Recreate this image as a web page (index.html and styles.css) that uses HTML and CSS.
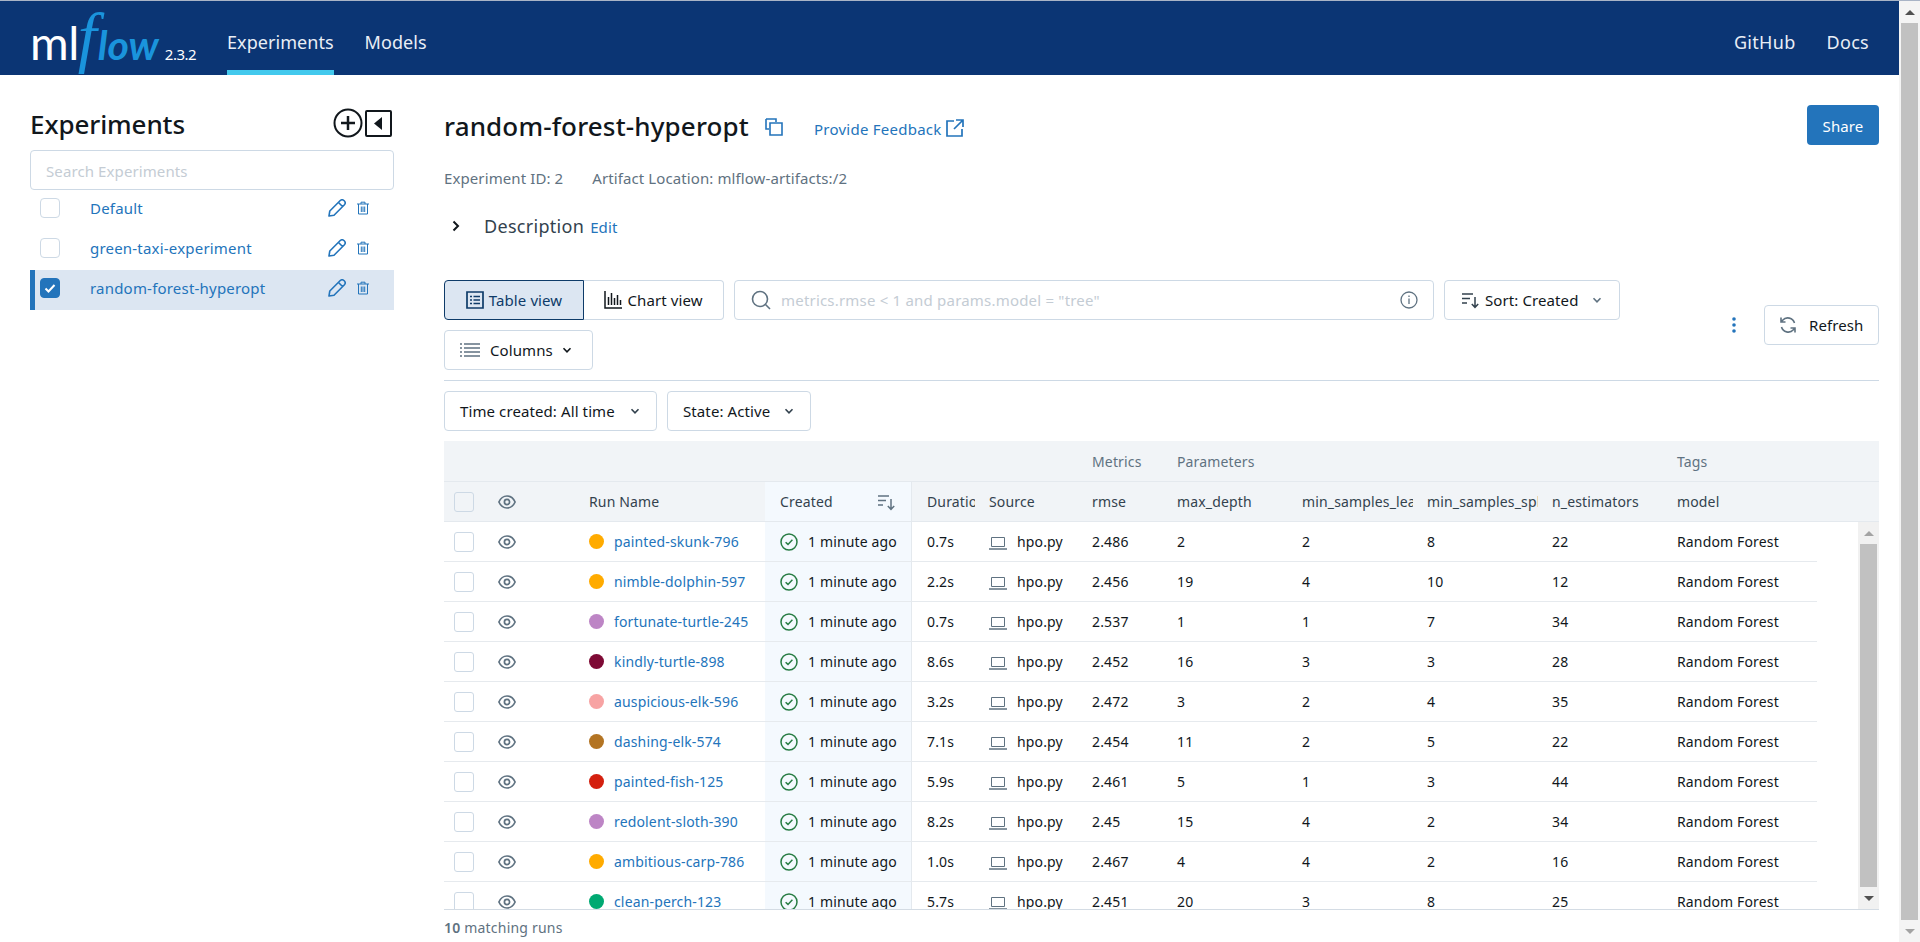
FILE: index.html
```html
<!DOCTYPE html>
<html lang="en">
<head>
<meta charset="UTF-8" />
<meta name="viewport" content="width=device-width, initial-scale=1" />
<title>MLflow Experiments</title>
<link rel="stylesheet" href="styles.css">
</head>
<body>

<svg class="defs" width="0" height="0">
  <symbol id="i-eye" viewBox="0 0 18 14"><path d="M.9 7C2.600 3.200 5.600 1 9 1S15.400 3.200 17.100 7C15.400 10.800 12.400 13 9 13S2.600 10.800 .9 7Z" fill="none" stroke="currentColor" stroke-width="1.700"/><circle cx="9" cy="7" r="2.600" fill="none" stroke="currentColor" stroke-width="1.700"/></symbol>
  <symbol id="i-ok" viewBox="0 0 18 18"><circle cx="9" cy="9" r="8" fill="none" stroke="currentColor" stroke-width="1.500"/><path d="M5.600 9.200 8 11.400 12.400 6.800" fill="none" stroke="currentColor" stroke-width="1.500"/></symbol>
  <symbol id="i-laptop" viewBox="0 0 18 16"><path d="M2.500 2.500h13v9h-13Z" fill="none" stroke="currentColor"/><path d="M0 14h18" stroke="currentColor" stroke-width="1.500"/></symbol>
  <symbol id="i-pencil" viewBox="0 0 18 18"><path d="M1 17 1.800 12 12 1.800a2.400 2.400 0 0 1 4.200 4.200L6 16.200ZM10.500 3.500 14.500 7.500" fill="none" stroke="currentColor" stroke-width="1.600" stroke-linejoin="round"/></symbol>
  <symbol id="i-trash" viewBox="0 0 14 14"><path d="M1 3h12M5 3V1.200h4V3M2.500 3v10h9V3M5.300 5.500v5.500M7 5.500v5.500M8.700 5.500v5.500" fill="none" stroke="currentColor"/></symbol>
  <symbol id="i-chev" viewBox="0 0 12 12"><path d="M2.500 4.200 6 7.800 9.500 4.200" fill="none" stroke="currentColor" stroke-width="1.600"/></symbol>
  <symbol id="i-sort" viewBox="0 0 18 18"><path d="M1 3h11M1 7.500h8M1 12h5M14 6v10M10.800 13 14 16.300 17.200 13" fill="none" stroke="currentColor" stroke-width="1.500"/></symbol>
</svg>

<div class="page">
  <header class="topbar">
    <a class="logo">
      <span class="logo-ml">ml</span><span class="logo-flow"><span class="logo-f">f</span>low</span>
      <span class="version">2.3.2</span>
    </a>
    <nav class="nav">
      <a class="nav-item active">Experiments</a>
      <a class="nav-item">Models</a>
    </nav>
    <nav class="nav-right">
      <a class="nav-item">GitHub</a>
      <a class="nav-item">Docs</a>
    </nav>
  </header>

  <div class="content">
    <aside class="sidebar">
      <div class="side-head">
        <h2>Experiments</h2>
        <div class="side-icons">
          <svg width="30" height="30" viewBox="0 0 30 30"><circle cx="15" cy="15" r="13.500" fill="none" stroke="#11171c" stroke-width="2"/><path d="M15 8v14M8 15h14" stroke="#11171c" stroke-width="2.500"/></svg>
          <svg width="27" height="27" viewBox="0 0 27 27"><rect x="1" y="1" width="25" height="25" rx="1" fill="none" stroke="#11171c" stroke-width="2"/><path d="M17 7v13l-8-6.500Z" fill="#11171c"/></svg>
        </div>
      </div>
      <input class="side-search" placeholder="Search Experiments">
      <div class="exp-row">
        <span class="check"></span>
        <a class="link exp-name">Default</a>
        <svg class="ic-pencil"><use href="#i-pencil"/></svg>
        <svg class="ic-trash"><use href="#i-trash"/></svg>
      </div>
      <div class="exp-row">
        <span class="check"></span>
        <a class="link exp-name">green-taxi-experiment</a>
        <svg class="ic-pencil"><use href="#i-pencil"/></svg>
        <svg class="ic-trash"><use href="#i-trash"/></svg>
      </div>
      <div class="exp-row selected">
        <span class="check checked"><svg width="14" height="14" viewBox="0 0 14 14"><path d="M2.500 7.500 5.500 10.500 11.500 4" fill="none" stroke="#fff" stroke-width="2"/></svg></span>
        <a class="link exp-name">random-forest-hyperopt</a>
        <svg class="ic-pencil"><use href="#i-pencil"/></svg>
        <svg class="ic-trash"><use href="#i-trash"/></svg>
      </div>
    </aside>

    <main class="main">
      <div class="title-row">
        <h1>random-forest-hyperopt</h1>
        <svg class="ic-copy" width="18" height="18" viewBox="0 0 18 18"><path d="M1 1h10v3M1 1v10h3M5 5h12v12H5Z" fill="none" stroke="#2374bb" stroke-width="1.600"/></svg>
        <a class="link feedback">Provide Feedback</a>
        <svg class="ic-ext" width="18" height="18" viewBox="0 0 18 18"><path d="M8 2H1v15h15v-7M10 1h7v7M17 1 8 10" fill="none" stroke="#2374bb" stroke-width="1.700"/></svg>
        <button class="btn-share">Share</button>
      </div>
      <div class="meta">
        <span>Experiment ID: 2</span>
        <span>Artifact Location: mlflow-artifacts:/2</span>
      </div>
      <div class="desc">
        <svg width="12" height="12" viewBox="0 0 12 12"><path d="M3.500 1.500 8 6l-4.500 4.500" fill="none" stroke="#11171c" stroke-width="2"/></svg>
        <span class="desc-title">Description</span>
        <a class="link desc-edit">Edit</a>
      </div>

      <div class="toolbar">
        <div class="toolbar-left">
          <div class="tool-row">
            <div class="segment">
              <button class="seg-btn seg-active">
                <svg width="18" height="18" viewBox="0 0 18 18"><path d="M1 1h16v16H1Z" fill="none" stroke="#0e3b69" stroke-width="1.700"/><path d="M4 5.500h2M4 9h2M4 12.500h2M7.500 5.500h6.500M7.500 9h6.500M7.500 12.500h6.500" stroke="#0e3b69" stroke-width="1.500"/></svg>
                Table view
              </button>
              <button class="seg-btn seg-second">
                <svg width="18" height="18" viewBox="0 0 18 18"><path d="M1 0v17h17M4.500 14V6M7.500 14V2M10.500 14V7M13.500 14V4M16.500 14V9" fill="none" stroke="#11171c" stroke-width="1.500"/></svg>
                Chart view
              </button>
            </div>
            <div class="searchbox">
              <svg class="ic-search" width="20" height="20" viewBox="0 0 20 20"><circle cx="9" cy="9" r="7.500" fill="none" stroke="#5f7281" stroke-width="1.600"/><path d="M14.500 14.500 19 19" stroke="#5f7281" stroke-width="1.600"/></svg>
              <span class="placeholder">metrics.rmse &lt; 1 and params.model = "tree"</span>
              <svg width="18" height="18" viewBox="0 0 18 18"><circle cx="9" cy="9" r="8" fill="none" stroke="#5f7281" stroke-width="1.300"/><path d="M9 7.500v5.500M9 4.500v1.500" stroke="#5f7281" stroke-width="1.300"/></svg>
            </div>
            <button class="btn btn-sort">
              <svg class="ic-sort"><use href="#i-sort"/></svg>
              Sort: Created
              <svg class="ic-chev chev-sort"><use href="#i-chev"/></svg>
            </button>
          </div>
          <div class="tool-row">
            <button class="btn btn-columns">
              <svg width="20" height="14" viewBox="0 0 20 14"><path d="M0 1h2M0 5h2M0 9h2M0 13h2M4 1h16M4 5h16M4 9h16M4 13h16" stroke="#5f7281" stroke-width="1.300"/></svg>
              Columns
              <svg class="ic-chev chev-columns"><use href="#i-chev"/></svg>
            </button>
          </div>
        </div>
        <div class="toolbar-right">
          <svg class="ic-kebab" width="4" height="16" viewBox="0 0 4 16"><circle cx="2" cy="2" r="1.800" fill="#2374bb"/><circle cx="2" cy="8" r="1.800" fill="#2374bb"/><circle cx="2" cy="14" r="1.800" fill="#2374bb"/></svg>
          <button class="btn btn-refresh">
            <svg width="18" height="18" viewBox="0 0 18 18"><path d="M15.500 7A7 7 0 0 0 3.600 4.200L2 6M2.500 11a7 7 0 0 0 11.900 2.800L16 12M2 1.500V6h4.500M16 16.500V12h-4.500" fill="none" stroke="#5f7281" stroke-width="1.600"/></svg>
            Refresh
          </button>
        </div>
      </div>

      <div class="filters">
        <button class="btn btn-time">Time created: All time<svg class="ic-chev"><use href="#i-chev"/></svg></button>
        <button class="btn btn-state">State: Active<svg class="ic-chev"><use href="#i-chev"/></svg></button>
      </div>

      <div class="grid">
        <div class="tr group-row">
          <div class="td c1"></div><div class="td"></div><div class="td"></div><div class="td"></div><div class="td"></div><div class="td"></div>
          <div class="td muted">Metrics</div>
          <div class="td muted">Parameters</div>
          <div class="td"></div><div class="td"></div><div class="td"></div>
          <div class="td muted">Tags</div>
        </div>
        <div class="tr head-row">
          <div class="td c1"><span class="rowcheck head-check"></span></div>
          <div class="td c2"><svg class="ic-eye"><use href="#i-eye"/></svg></div>
          <div class="td">Run Name</div>
          <div class="td c-created head-created">Created<svg class="ic-headsort"><use href="#i-sort"/></svg></div>
          <div class="td c-dur clip">Duration</div>
          <div class="td">Source</div>
          <div class="td">rmse</div>
          <div class="td">max_depth</div>
          <div class="td clip">min_samples_leaf</div>
          <div class="td clip">min_samples_split</div>
          <div class="td">n_estimators</div>
          <div class="td">model</div>
        </div>
        <div class="body">
          <div class="rows">
            <div class="tr"><div class="td c1"><span class="rowcheck"></span></div><div class="td c2"><svg class="ic-eye"><use href="#i-eye"/></svg></div><div class="td"><span class="dot orange"></span><a class="link">painted-skunk-796</a></div><div class="td c-created"><svg class="ic-ok"><use href="#i-ok"/></svg>1 minute ago</div><div class="td c-dur">0.7s</div><div class="td"><svg class="ic-laptop"><use href="#i-laptop"/></svg>hpo.py</div><div class="td">2.486</div><div class="td">2</div><div class="td">2</div><div class="td">8</div><div class="td">22</div><div class="td">Random Forest</div></div>
            <div class="tr"><div class="td c1"><span class="rowcheck"></span></div><div class="td c2"><svg class="ic-eye"><use href="#i-eye"/></svg></div><div class="td"><span class="dot orange"></span><a class="link">nimble-dolphin-597</a></div><div class="td c-created"><svg class="ic-ok"><use href="#i-ok"/></svg>1 minute ago</div><div class="td c-dur">2.2s</div><div class="td"><svg class="ic-laptop"><use href="#i-laptop"/></svg>hpo.py</div><div class="td">2.456</div><div class="td">19</div><div class="td">4</div><div class="td">10</div><div class="td">12</div><div class="td">Random Forest</div></div>
            <div class="tr"><div class="td c1"><span class="rowcheck"></span></div><div class="td c2"><svg class="ic-eye"><use href="#i-eye"/></svg></div><div class="td"><span class="dot purple"></span><a class="link">fortunate-turtle-245</a></div><div class="td c-created"><svg class="ic-ok"><use href="#i-ok"/></svg>1 minute ago</div><div class="td c-dur">0.7s</div><div class="td"><svg class="ic-laptop"><use href="#i-laptop"/></svg>hpo.py</div><div class="td">2.537</div><div class="td">1</div><div class="td">1</div><div class="td">7</div><div class="td">34</div><div class="td">Random Forest</div></div>
            <div class="tr"><div class="td c1"><span class="rowcheck"></span></div><div class="td c2"><svg class="ic-eye"><use href="#i-eye"/></svg></div><div class="td"><span class="dot maroon"></span><a class="link">kindly-turtle-898</a></div><div class="td c-created"><svg class="ic-ok"><use href="#i-ok"/></svg>1 minute ago</div><div class="td c-dur">8.6s</div><div class="td"><svg class="ic-laptop"><use href="#i-laptop"/></svg>hpo.py</div><div class="td">2.452</div><div class="td">16</div><div class="td">3</div><div class="td">3</div><div class="td">28</div><div class="td">Random Forest</div></div>
            <div class="tr"><div class="td c1"><span class="rowcheck"></span></div><div class="td c2"><svg class="ic-eye"><use href="#i-eye"/></svg></div><div class="td"><span class="dot pink"></span><a class="link">auspicious-elk-596</a></div><div class="td c-created"><svg class="ic-ok"><use href="#i-ok"/></svg>1 minute ago</div><div class="td c-dur">3.2s</div><div class="td"><svg class="ic-laptop"><use href="#i-laptop"/></svg>hpo.py</div><div class="td">2.472</div><div class="td">3</div><div class="td">2</div><div class="td">4</div><div class="td">35</div><div class="td">Random Forest</div></div>
            <div class="tr"><div class="td c1"><span class="rowcheck"></span></div><div class="td c2"><svg class="ic-eye"><use href="#i-eye"/></svg></div><div class="td"><span class="dot brown"></span><a class="link">dashing-elk-574</a></div><div class="td c-created"><svg class="ic-ok"><use href="#i-ok"/></svg>1 minute ago</div><div class="td c-dur">7.1s</div><div class="td"><svg class="ic-laptop"><use href="#i-laptop"/></svg>hpo.py</div><div class="td">2.454</div><div class="td">11</div><div class="td">2</div><div class="td">5</div><div class="td">22</div><div class="td">Random Forest</div></div>
            <div class="tr"><div class="td c1"><span class="rowcheck"></span></div><div class="td c2"><svg class="ic-eye"><use href="#i-eye"/></svg></div><div class="td"><span class="dot red"></span><a class="link">painted-fish-125</a></div><div class="td c-created"><svg class="ic-ok"><use href="#i-ok"/></svg>1 minute ago</div><div class="td c-dur">5.9s</div><div class="td"><svg class="ic-laptop"><use href="#i-laptop"/></svg>hpo.py</div><div class="td">2.461</div><div class="td">5</div><div class="td">1</div><div class="td">3</div><div class="td">44</div><div class="td">Random Forest</div></div>
            <div class="tr"><div class="td c1"><span class="rowcheck"></span></div><div class="td c2"><svg class="ic-eye"><use href="#i-eye"/></svg></div><div class="td"><span class="dot purple"></span><a class="link">redolent-sloth-390</a></div><div class="td c-created"><svg class="ic-ok"><use href="#i-ok"/></svg>1 minute ago</div><div class="td c-dur">8.2s</div><div class="td"><svg class="ic-laptop"><use href="#i-laptop"/></svg>hpo.py</div><div class="td">2.45</div><div class="td">15</div><div class="td">4</div><div class="td">2</div><div class="td">34</div><div class="td">Random Forest</div></div>
            <div class="tr"><div class="td c1"><span class="rowcheck"></span></div><div class="td c2"><svg class="ic-eye"><use href="#i-eye"/></svg></div><div class="td"><span class="dot orange"></span><a class="link">ambitious-carp-786</a></div><div class="td c-created"><svg class="ic-ok"><use href="#i-ok"/></svg>1 minute ago</div><div class="td c-dur">1.0s</div><div class="td"><svg class="ic-laptop"><use href="#i-laptop"/></svg>hpo.py</div><div class="td">2.467</div><div class="td">4</div><div class="td">4</div><div class="td">2</div><div class="td">16</div><div class="td">Random Forest</div></div>
            <div class="tr"><div class="td c1"><span class="rowcheck"></span></div><div class="td c2"><svg class="ic-eye"><use href="#i-eye"/></svg></div><div class="td"><span class="dot green"></span><a class="link">clean-perch-123</a></div><div class="td c-created"><svg class="ic-ok"><use href="#i-ok"/></svg>1 minute ago</div><div class="td c-dur">5.7s</div><div class="td"><svg class="ic-laptop"><use href="#i-laptop"/></svg>hpo.py</div><div class="td">2.451</div><div class="td">20</div><div class="td">3</div><div class="td">8</div><div class="td">25</div><div class="td">Random Forest</div></div>
          </div>
          <div class="scroll scroll-grid">
            <span class="arrow up"></span>
            <span class="thumb"></span>
            <span class="arrow down"></span>
          </div>
        </div>
      </div>
      <div class="footer"><b>10</b> matching runs</div>
    </main>
  </div>
</div>

<div class="scroll scroll-page">
  <span class="arrow up dark"></span>
  <span class="thumb"></span>
  <span class="arrow down"></span>
</div>

</body>
</html>
```

FILE: styles.css
```css
* {
  box-sizing: border-box;
}
html, body {
  margin: 0;
  height: 100%;
  overflow: hidden;
}
body {
  display: flex;
  border-top: 1px solid #a9b4c6;
  font-family: "Noto Sans", sans-serif;
  font-size: 15px;
  letter-spacing: 0.1px;
  color: #11171c;
  background: #fff;
}
button, input {
  font: inherit;
  letter-spacing: inherit;
  color: inherit;
}
h1, h2 {
  margin: 0;
  font-weight: 500;
}
.defs {
  position: absolute;
}
.link {
  color: #2374bb;
}
.page {
  width: 1899px;
  flex: none;
}

/* top bar */
.topbar {
  height: 74px;
  padding-left: 30px;
  display: flex;
  background: #0b3574;
  color: #fff;
}
.logo {
  width: 167px;
  flex: none;
  display: flex;
  align-items: baseline;
  font-family: "Lato", sans-serif;
  letter-spacing: 0;
  line-height: 72px;
  white-space: nowrap;
}
.logo-ml {
  font-size: 47px;
  letter-spacing: -0.5px;
}
.logo-flow {
  margin-left: 1px;
  font-size: 41px;
  font-weight: 700;
  font-style: italic;
  color: #1a94dc;
}
.logo-f {
  font-family: "Liberation Serif", serif;
  font-size: 68px;
  font-weight: 400;
  margin: 0 1px 0 -2px;
}
.version {
  margin-left: 6px;
  font-family: "Noto Sans", sans-serif;
  font-size: 15px;
  letter-spacing: -0.5px;
}
.nav, .nav-right {
  display: flex;
  gap: 31px;
  margin-left: 30px;
}
.nav-right {
  margin-left: auto;
  margin-right: 30px;
}
.nav-item {
  height: 74px;
  padding-top: 23px;
  line-height: 36px;
  font-size: 18px;
  letter-spacing: 0.05px;
  color: #e9eef6;
}
.nav-right .nav-item {
  letter-spacing: 0.3px;
}
.nav-item.active {
  border-bottom: 5px solid #43c9ed;
}

/* layout */
.content {
  display: flex;
  padding: 30px 20px 0 30px;
}
.sidebar {
  width: 364px;
  flex: none;
}
.main {
  margin-left: 50px;
  width: 1435px;
  flex: none;
}

/* sidebar */
.side-head {
  height: 45px;
  display: flex;
  justify-content: space-between;
}
.side-head h2 {
  font-size: 26px;
  line-height: 38px;
  letter-spacing: -0.1px;
}
.side-icons {
  display: flex;
  align-items: flex-start;
  margin: 3px 2px 0 0;
  gap: 2px;
}
.side-icons svg:last-child {
  margin-top: 2px;
}
.side-search {
  display: block;
  width: 100%;
  height: 40px;
  padding: 2px 15px 0;
  border: 1px solid #cdd9e5;
  border-radius: 4px;
  outline: none;
}
.side-search::placeholder {
  color: #c4ccd4;
}
.exp-row {
  height: 40px;
  display: flex;
  align-items: center;
  padding-left: 10px;
  padding-bottom: 4px;
  letter-spacing: 0.2px;
}
.exp-row.selected {
  padding-left: 5px;
  border-left: 5px solid #2374bb;
  background: #dce6f2;
}
.check {
  width: 20px;
  height: 20px;
  flex: none;
  border: 1px solid #cdd9e5;
  border-radius: 4px;
  display: flex;
  align-items: center;
  justify-content: center;
}
.check.checked {
  background: #2374bb;
  border-color: #2374bb;
}
.exp-name {
  margin-left: 30px;
  width: 238px;
  flex: none;
}
.ic-pencil {
  width: 18px;
  height: 18px;
  color: #2374bb;
}
.ic-trash {
  width: 14px;
  height: 14px;
  margin-left: 10px;
  color: #2374bb;
}

/* title */
.title-row {
  height: 40px;
  display: flex;
  align-items: center;
}
.title-row h1 {
  font-size: 26px;
  line-height: 40px;
  letter-spacing: 0.15px;
  padding-top: 2px;
}
.ic-copy {
  margin-left: 16px;
  margin-top: 3px;
}
.feedback {
  margin-left: 31px;
  margin-right: 4px;
  padding-top: 8px;
  letter-spacing: 0.25px;
}
.ic-ext {
  margin-top: 6px;
}
.btn-share {
  margin-left: auto;
  width: 72px;
  height: 40px;
  padding: 1px 0 0;
  border: 0;
  border-radius: 4px;
  background: #2374bb;
  color: #fff;
}
.meta {
  margin-top: 23px;
  height: 20px;
  line-height: 20px;
  display: flex;
  gap: 29px;
  color: #5f7281;
}
.desc {
  margin-top: 18px;
  height: 40px;
  display: flex;
  align-items: center;
}
.desc svg {
  margin-left: 6px;
}
.desc-title {
  margin-left: 22px;
  font-size: 18px;
  letter-spacing: 0.3px;
  color: #33424e;
}
.desc-edit {
  margin-left: 6px;
  padding-top: 2px;
}

/* toolbar */
.toolbar {
  margin-top: 34px;
  display: flex;
  justify-content: space-between;
  align-items: center;
}
.tool-row {
  display: flex;
  height: 40px;
}
.tool-row + .tool-row {
  margin-top: 10px;
}
.segment {
  display: flex;
}
.seg-btn {
  height: 40px;
  width: 140px;
  padding: 0;
  display: flex;
  align-items: center;
  justify-content: center;
  gap: 5px;
  background: #fff;
  border: 1px solid #cdd9e5;
}
.seg-active {
  background: #dce6f2;
  border-color: #0e3b69;
  border-radius: 4px 0 0 4px;
  color: #0e3b69;
}
.seg-second {
  border-left: 0;
  border-radius: 0 4px 4px 0;
}
.searchbox {
  width: 700px;
  height: 40px;
  margin-left: 10px;
  padding: 0 15px 0 16px;
  display: flex;
  align-items: center;
  border: 1px solid #cdd9e5;
  border-radius: 4px;
}
.placeholder {
  flex: 1;
  margin-left: 10px;
  letter-spacing: 0.2px;
  color: #c4ccd4;
}
.btn {
  height: 40px;
  display: flex;
  align-items: center;
  background: #fff;
  border: 1px solid #cdd9e5;
  border-radius: 4px;
  padding: 0 15px;
}
.ic-chev {
  width: 12px;
  height: 12px;
  flex: none;
  color: #33424e;
}
.btn-sort {
  width: 176px;
  margin-left: 10px;
  padding: 0 16px;
}
.ic-sort {
  width: 18px;
  height: 18px;
  margin-right: 6px;
  color: #33424e;
}
.chev-sort {
  margin-left: auto;
  color: #5f7281;
}
.btn-columns {
  width: 149px;
}
.btn-columns svg:first-child {
  margin-right: 10px;
}
.chev-columns {
  margin-left: 8px;
  color: #11171c;
}
.toolbar-right {
  display: flex;
  align-items: center;
}
.ic-kebab {
  margin-right: 28px;
}
.btn-refresh {
  width: 115px;
  gap: 12px;
  padding: 0 14px;
}
.filters {
  margin-top: 10px;
  padding-top: 10px;
  border-top: 1px solid #cdd9e5;
  display: flex;
  gap: 10px;
}
.btn-time {
  width: 213px;
  justify-content: space-between;
}
.btn-state {
  width: 144px;
  justify-content: space-between;
}

/* runs table */
.grid {
  margin-top: 10px;
  height: 469px;
  border-bottom: 1px solid #d4dce4;
  overflow: hidden;
  font-size: 14px;
  letter-spacing: 0.15px;
}
.tr {
  display: grid;
  grid-template-columns: 50px 83px 188px 147px 65px 103px 85px 125px 125px 125px 125px 152px;
  height: 40px;
}
.td {
  display: flex;
  align-items: center;
  padding-left: 12px;
  overflow: hidden;
  white-space: nowrap;
}
.group-row, .head-row {
  background: #f1f4f7;
  border-bottom: 1px solid #e4e9ee;
}
.group-row {
  height: 41px;
}
.muted {
  color: #5f7281;
}
.head-row {
  color: #33424e;
}
.c1 {
  padding-left: 10px;
}
.c2 {
  padding-left: 4px;
}
.c-created {
  padding-left: 15px;
  background: #f4f9fe;
  border-right: 1px solid #e4e9ee;
}
.head-created {
  justify-content: space-between;
  padding-right: 16px;
}
.c-dur {
  padding-left: 15px;
}
.clip {
  margin-right: 2px;
}
.ic-eye {
  width: 18px;
  height: 14px;
  flex: none;
  color: #5f7281;
}
.ic-headsort {
  width: 18px;
  height: 18px;
  flex: none;
  color: #5f7281;
}
.rowcheck {
  width: 20px;
  height: 20px;
  background: #fff;
  border: 1px solid #cdd9e5;
  border-radius: 3px;
}
.head-check {
  background: #f1f4f7;
}
.body {
  height: 387px;
  display: flex;
  justify-content: space-between;
}
.rows {
  width: 1373px;
}
.rows .tr {
  border-bottom: 1px solid #e6eaee;
}
.dot {
  width: 15px;
  height: 15px;
  flex: none;
  border-radius: 50%;
  margin-right: 10px;
}
.orange { background: #ffab00; }
.purple { background: #bd85c5; }
.maroon { background: #7e0a35; }
.pink { background: #f7a3a3; }
.brown { background: #b37423; }
.red { background: #d4200f; }
.green { background: #00a972; }
.ic-ok {
  width: 18px;
  height: 18px;
  flex: none;
  margin-right: 10px;
  color: #277c43;
}
.ic-laptop {
  width: 18px;
  height: 16px;
  flex: none;
  margin-top: 3px;
  margin-right: 10px;
  color: #5f7281;
}
.footer {
  height: 36px;
  line-height: 36px;
  font-size: 14px;
  letter-spacing: 0.2px;
  color: #5f7281;
}
.footer b {
  font-weight: 600;
}

/* scrollbars */
.scroll {
  width: 21px;
  flex: none;
  display: flex;
  flex-direction: column;
  align-items: center;
  background: #f1f1f1;
}
.scroll-page {
  background: #f4f4f4;
}
.thumb {
  flex: 1;
  width: 17px;
  background: #c1c1c1;
}
.arrow {
  height: 22px;
  display: flex;
  align-items: center;
  justify-content: center;
}
.arrow::before {
  content: "";
  border-left: 5px solid transparent;
  border-right: 5px solid transparent;
}
.arrow.up::before {
  border-bottom: 5px solid #a3a3a3;
}
.arrow.down::before {
  border-top: 5px solid #505050;
}
.arrow.up.dark::before {
  border-bottom-color: #505050;
}
.scroll-page .arrow.down::before {
  border-top-color: #a3a3a3;
}
```
